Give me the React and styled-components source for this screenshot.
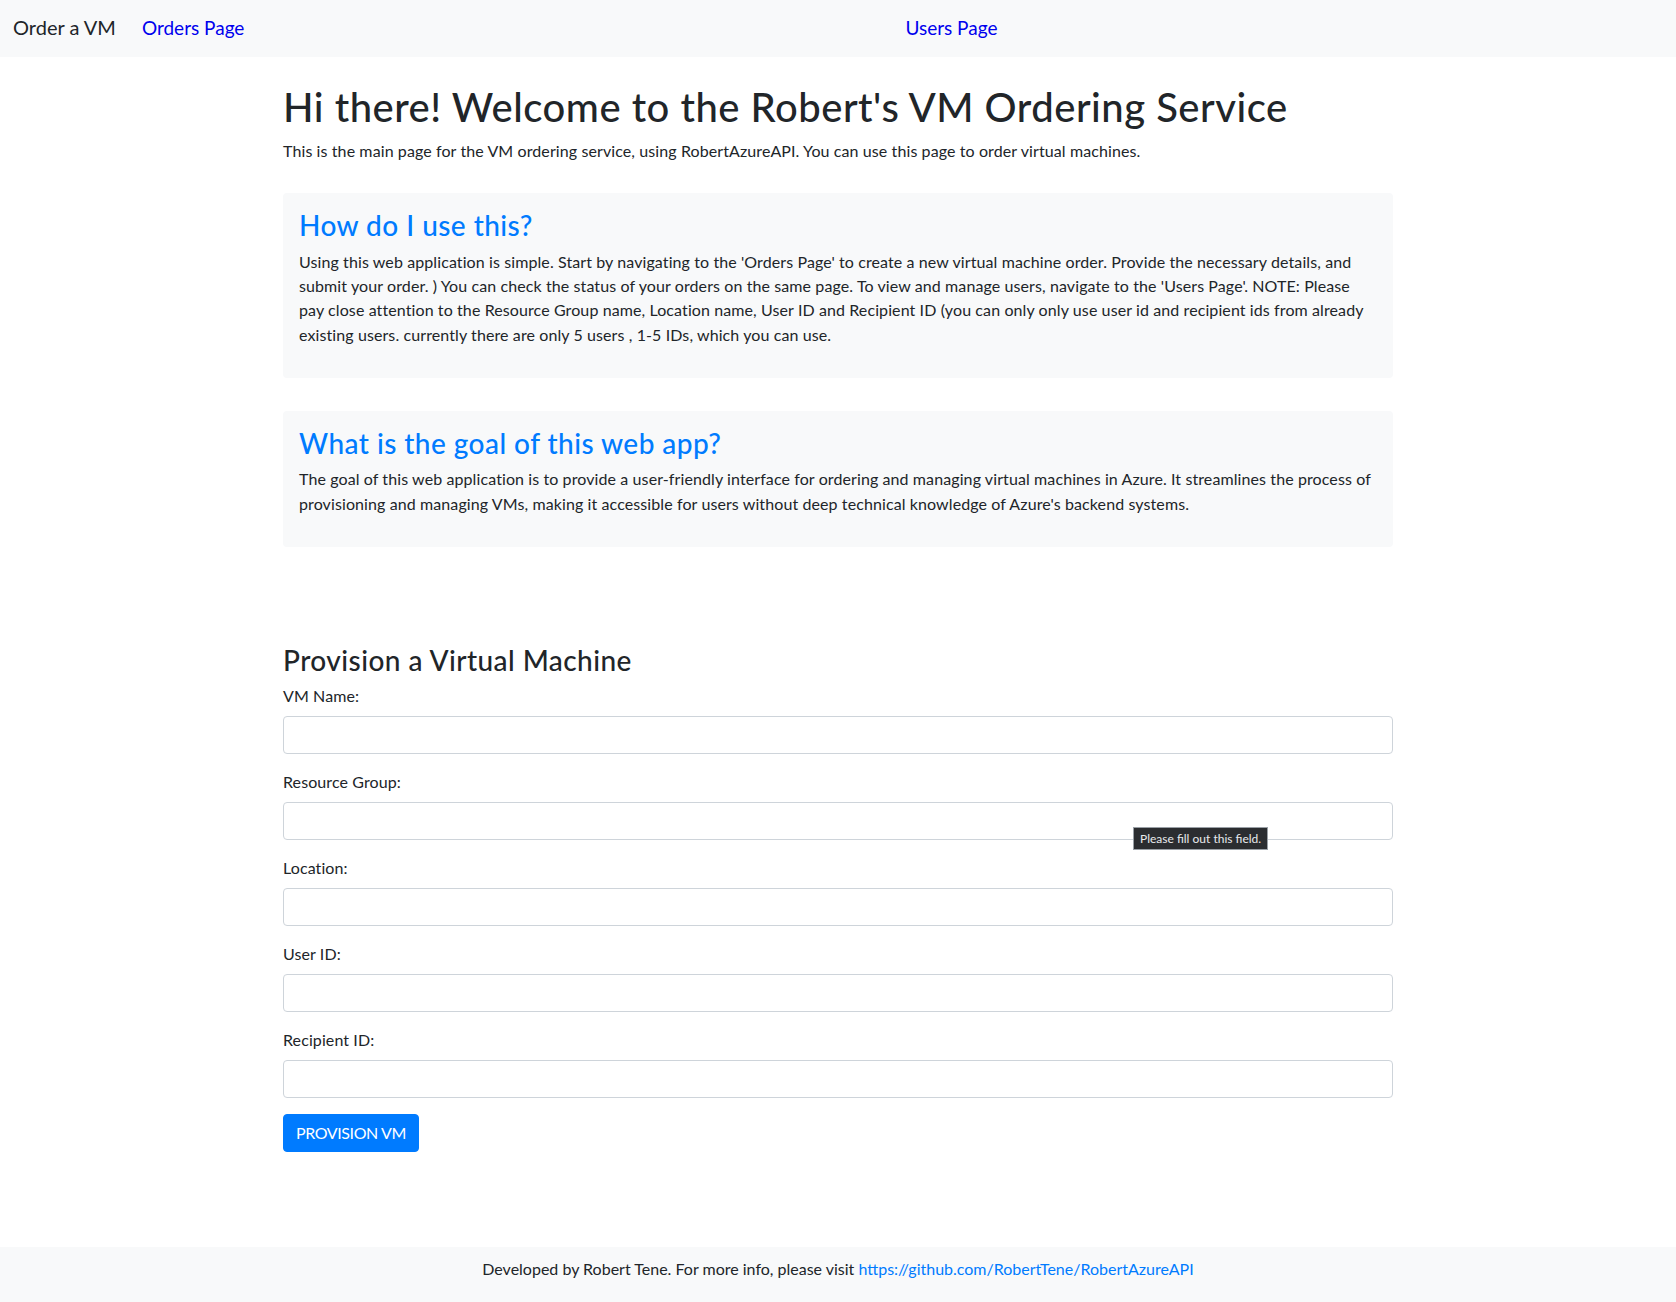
import React from "react";
import styled, { createGlobalStyle } from "styled-components";

const GlobalStyle = createGlobalStyle`
  * {
    box-sizing: border-box;
  }

  body {
    margin: 0;
    font-family: "Lato", "Segoe UI", sans-serif;
    font-size: 16px;
    line-height: 1.5;
    letter-spacing: 0.1px;
    color: #212529;
    background: #fff;
  }
`;

const Page = styled.div`
  min-height: 100vh;
  display: flex;
  flex-direction: column;
`;

const Navbar = styled.nav`
  display: flex;
  align-items: baseline;
  height: 57px;
  padding: 12px 13px 0;
  background: #f8f9fa;
  font-size: 20px;
  line-height: 30px;
  letter-spacing: 0;
`;

const Brand = styled.a`
  color: #212529;
  text-decoration: none;
  margin-right: 26px;
`;

const NavList = styled.div`
  display: flex;
  align-items: baseline;
  gap: 661px;
`;

const NavItem = styled.a`
  color: #0000ee;
  font-size: 19px;
  text-decoration: none;
`;

const Container = styled.main`
  width: 100%;
  max-width: 1140px;
  margin: 0 auto;
  padding: 26px 15px 0;
`;

const MainTitle = styled.h1`
  font-size: 40px;
  font-weight: 500;
  line-height: 1.2;
  letter-spacing: 0.5px;
  margin: 0 0 8px;
`;

const Intro = styled.p`
  margin: 0 0 30px;
`;

const InfoCard = styled.section`
  background: #f8f9fa;
  border-radius: 4px;
  padding: 16px 16px 0;
  margin-bottom: ${(props) => props.$gap || "33px"};
`;

const CardTitle = styled.h3`
  color: #007bff;
  font-size: 28px;
  font-weight: 500;
  line-height: 1.2;
  letter-spacing: 0.45px;
  margin: 0 0 7px;
`;

const CardText = styled.p`
  margin: 0;
  padding-bottom: 31px;
  line-height: 1.52;
`;

const FormTitle = styled.h3`
  font-size: 28px;
  font-weight: 500;
  line-height: 1.2;
  letter-spacing: 0.45px;
  margin: 0 0 6px;
`;

const Field = styled.div`
  position: relative;
  margin-bottom: 16px;
`;

const Label = styled.label`
  display: block;
  margin-bottom: 8px;
`;

const Input = styled.input`
  display: block;
  width: 100%;
  height: 38px;
  padding: 6px 12px;
  font: inherit;
  color: #495057;
  background: #fff;
  border: 1px solid #ced4da;
  border-radius: 4px;
  outline: none;
`;

const Tooltip = styled.div`
  position: absolute;
  left: 850px;
  top: 57px;
  padding: 2px 6px;
  background: #2b2d30;
  border: 1px solid #9aa0a6;
  color: #e8eaed;
  font-size: 12px;
  line-height: 17px;
  letter-spacing: 0;
  white-space: nowrap;
  z-index: 2;
`;

const SubmitButton = styled.button`
  display: inline-block;
  padding: 6px 12px;
  font: inherit;
  letter-spacing: -0.4px;
  text-transform: uppercase;
  color: #fff;
  background: #007bff;
  border: 1px solid #007bff;
  border-radius: 4px;
  cursor: pointer;
`;

const Footer = styled.footer`
  margin-top: auto;
  padding: 10px 0 21px;
  background: #f8f9fa;
  text-align: center;
  letter-spacing: 0;

  a {
    color: #007bff;
    text-decoration: none;
  }
`;

const fields = [
  { id: "vmName", label: "VM Name:" },
  { id: "resourceGroup", label: "Resource Group:", tip: true },
  { id: "location", label: "Location:" },
  { id: "userId", label: "User ID:" },
  { id: "recipientId", label: "Recipient ID:" },
];

const App = () => {
  return (
    <Page>
      <GlobalStyle />
      <Navbar>
        <Brand href="#">Order a VM</Brand>
        <NavList>
          <NavItem href="#">Orders Page</NavItem>
          <NavItem href="#">Users Page</NavItem>
        </NavList>
      </Navbar>

      <Container>
        <MainTitle>Hi there! Welcome to the Robert's VM Ordering Service</MainTitle>
        <Intro>
          This is the main page for the VM ordering service, using RobertAzureAPI. You can use this page to order virtual machines.
        </Intro>

        <InfoCard>
          <CardTitle>How do I use this?</CardTitle>
          <CardText>
            Using this web application is simple. Start by navigating to the 'Orders Page' to create a new virtual machine order. Provide the necessary details, and submit your order. ) You can check the status of your orders on the same page. To view and manage users, navigate to the 'Users Page'. NOTE: Please pay close attention to the Resource Group name, Location name, User ID and Recipient ID (you can only only use user id and recipient ids from already existing users. currently there are only 5 users , 1-5 IDs, which you can use.
          </CardText>
        </InfoCard>

        <InfoCard $gap="97px">
          <CardTitle>What is the goal of this web app?</CardTitle>
          <CardText>
            The goal of this web application is to provide a user-friendly interface for ordering and managing virtual machines in Azure. It streamlines the process of provisioning and managing VMs, making it accessible for users without deep technical knowledge of Azure's backend systems.
          </CardText>
        </InfoCard>

        <FormTitle>Provision a Virtual Machine</FormTitle>
        <form onSubmit={(e) => e.preventDefault()}>
          {fields.map((f) => (
            <Field key={f.id}>
              <Label htmlFor={f.id}>{f.label}</Label>
              <Input id={f.id} type="text" />
              {f.tip && <Tooltip>Please fill out this field.</Tooltip>}
            </Field>
          ))}
          <SubmitButton type="submit">Provision VM</SubmitButton>
        </form>
      </Container>

      <Footer>
        Developed by Robert Tene. For more info, please visit{" "}
        <a href="#">https://github.com/RobertTene/RobertAzureAPI</a>
      </Footer>
    </Page>
  );
};

export default App;
